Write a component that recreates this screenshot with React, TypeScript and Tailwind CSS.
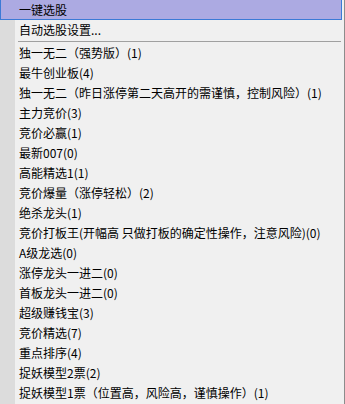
const items = [
  "独一无二（强势版）(1)",
  "最牛创业板(4)",
  "独一无二（昨日涨停第二天高开的需谨慎，控制风险）(1)",
  "主力竞价(3)",
  "竞价必赢(1)",
  "最新007(0)",
  "高能精选1(1)",
  "竞价爆量（涨停轻松）(2)",
  "绝杀龙头(1)",
  "竞价打板王(开幅高 只做打板的确定性操作，注意风险)(0)",
  "A级龙选(0)",
  "涨停龙头一进二(0)",
  "首板龙头一进二(0)",
  "超级赚钱宝(3)",
  "竞价精选(7)",
  "重点排序(4)",
  "捉妖模型2票(2)",
  "捉妖模型1票（位置高，风险高，谨慎操作）(1)",
];

function Row({ label }: { label: string }) {
  return (
    <div className="flex h-[20px] items-center pl-[19px] whitespace-nowrap">
      {label}
    </div>
  );
}

export default function App() {
  return (
    <div
      className="relative h-[404px] w-[345px] overflow-hidden bg-[#f0f0f0] text-[12px] text-black"
      style={{ fontFamily: '"Noto Sans CJK SC", "Microsoft YaHei", sans-serif' }}
    >
      {/* gutter + right frame */}
      <div className="absolute inset-y-0 left-0 w-[15px] bg-[#dcdcdc]" />
      <div className="absolute inset-y-0 right-0 w-[1px] bg-[#8c8c8c]" />

      <div className="relative pr-[3px]">
        {/* highlighted item */}
        <div className="flex h-[20px] items-center border-x border-b border-[#3b7ad6] bg-[#acaae2] pl-[18px]">
          一键选股
        </div>
        <div className="flex h-[20px] items-center pl-[19px]">自动选股设置...</div>

        {/* separator */}
        <div className="flex h-[3px] items-center pl-[18px] pr-[1px]">
          <div className="h-[1px] w-full bg-[#a0a0a0]" />
        </div>

        {items.map((label) => (
          <Row key={label} label={label} />
        ))}
      </div>
    </div>
  );
}
